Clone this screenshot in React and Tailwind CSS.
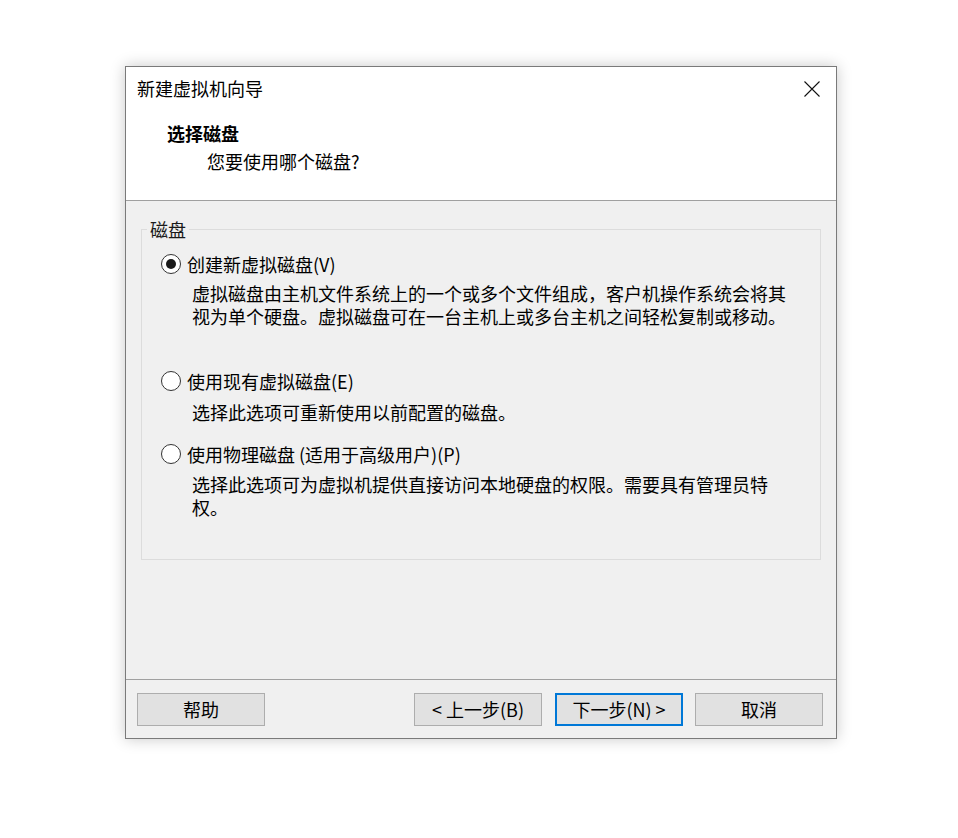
import React from 'react';

const font = { fontFamily: '"Noto Sans CJK SC", "Liberation Sans", sans-serif' };

const Radio = ({ checked }) => (
  <span className="flex h-[20px] w-[20px] shrink-0 items-center justify-center rounded-full border border-[#333333] bg-white">
    {checked && <span className="h-[10px] w-[10px] rounded-full bg-[#1a1a1a]" />}
  </span>
);

const Button = ({ children, focused }) => (
  <button
    className={`flex h-[33px] w-[128px] items-center justify-center bg-[#e1e1e1] pb-[1px] text-[18px] leading-none text-black ${
      focused ? 'border-2 border-[#0078d7]' : 'border border-[#adadad]'
    }`}
  >
    {children}
  </button>
);

const options = [
  {
    label: '创建新虚拟磁盘(V)',
    checked: true,
    lines: [
      '虚拟磁盘由主机文件系统上的一个或多个文件组成，客户机操作系统会将其',
      '视为单个硬盘。虚拟磁盘可在一台主机上或多台主机之间轻松复制或移动。',
    ],
    descGap: 'mt-[6px]',
    gap: 'mb-[41px]',
  },
  {
    label: '使用现有虚拟磁盘(E)',
    lines: ['选择此选项可重新使用以前配置的磁盘。'],
    descGap: 'mt-[8px]',
    gap: 'mb-[18px]',
  },
  {
    label: '使用物理磁盘 (适用于高级用户)(P)',
    lines: ['选择此选项可为虚拟机提供直接访问本地硬盘的权限。需要具有管理员特', '权。'],
    descGap: 'mt-[7px]',
    gap: '',
  },
];

export default function App() {
  return (
    <div className="min-h-[838px] bg-white pl-[125px] pt-[66px]" style={font}>
      <div className="w-[712px] border border-[#7a7a7a] bg-[#f0f0f0] shadow-[0_0_14px_rgba(0,0,0,0.22)]">
        {/* Header */}
        <div className="h-[134px] border-b border-[#a0a0a0] bg-white pt-[9px]">
          <div className="flex h-[24px] items-center justify-between pl-[11px] pr-[16px]">
            <span className="text-[18px] leading-[24px] text-black">新建虚拟机向导</span>
            <svg width="16" height="16" viewBox="0 0 16 16" className="mt-[1px]">
              <path d="M0.5 0.5 L15.5 15.5 M15.5 0.5 L0.5 15.5" stroke="#111" strokeWidth="1.1" fill="none" />
            </svg>
          </div>
          <div className="mt-[21px] pl-[41px] text-[18px] font-bold leading-[24px] text-black">选择磁盘</div>
          <div className="mt-[4px] pl-[81px] text-[18px] leading-[24px] text-black">您要使用哪个磁盘?</div>
        </div>

        {/* Body */}
        <div className="h-[478px] px-[15px] pt-[28px]">
          <div className="relative h-[331px] border border-[#dcdcdc] pl-[19px] pt-[22px]">
            <span className="absolute left-[5px] top-[-13px] bg-[#f0f0f0] px-[3px] text-[18px] leading-[24px] text-[#1a1a1a]">
              磁盘
            </span>
            {options.map((o) => (
              <div key={o.label} className={o.gap}>
                <div className="flex h-[24px] items-center gap-[6px]">
                  <Radio checked={o.checked} />
                  <span className="whitespace-nowrap text-[18px] leading-[24px] text-black">{o.label}</span>
                </div>
                <div className={`${o.descGap} pl-[31px] text-[18px] leading-[23px] text-black`}>
                  {o.lines.map((l) => (
                    <div key={l} className="whitespace-nowrap">{l}</div>
                  ))}
                </div>
              </div>
            ))}
          </div>
        </div>

        {/* Footer */}
        <div className="flex h-[59px] items-start border-t border-[#a0a0a0] pl-[11px] pr-[13px] pt-[13px]">
          <Button>帮助</Button>
          <div className="ml-auto flex gap-[12px]">
            <div className="flex gap-[13px]">
              <Button>&lt; 上一步(B)</Button>
              <Button focused>下一步(N) &gt;</Button>
            </div>
            <Button>取消</Button>
          </div>
        </div>
      </div>
    </div>
  );
}
